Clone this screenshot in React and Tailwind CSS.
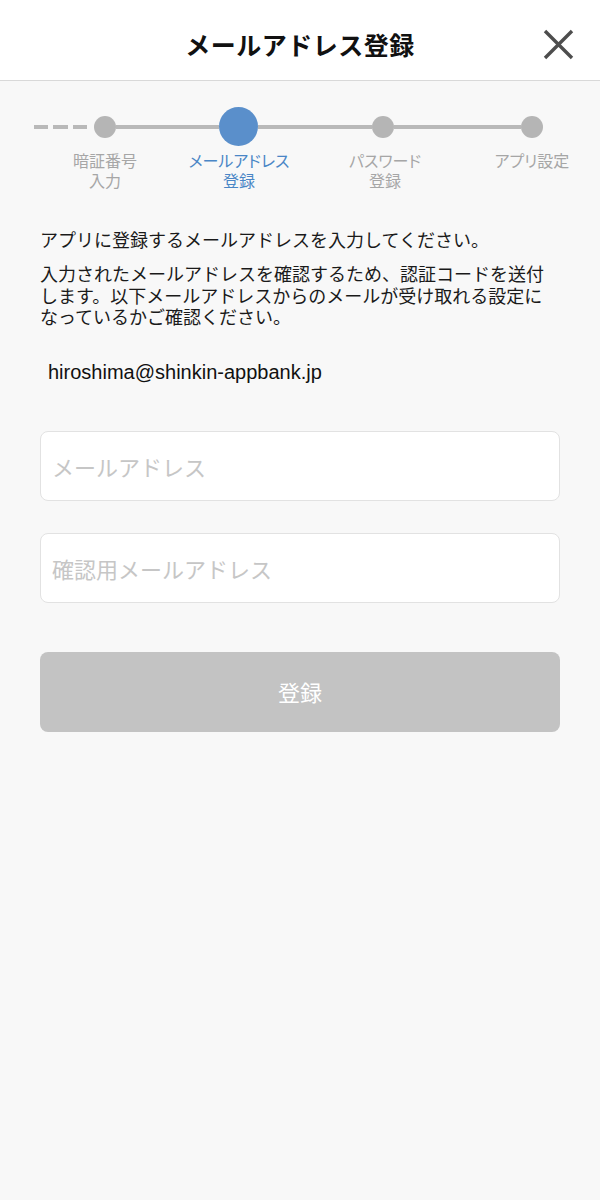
import { useState } from 'react';

const JP = "font-['Noto_Sans_CJK_JP',sans-serif]";

const steps = [
  { lines: ['暗証番号', '入力'], ml: 'ml-[45px]' },
  { lines: ['メールアドレス', '登録'], ml: 'ml-[14px]', active: true },
  { lines: ['パスワード', '登録'], ml: 'ml-[26px]' },
  { lines: ['アプリ設定'], ml: 'ml-[27px]' },
];

function Stepper() {
  return (
    <div className="pt-[26px]">
      <div className="flex items-center h-[39px] pl-[34px]">
        <div className="flex items-center gap-[5px]">
          <span className="w-[14px] h-[4px] bg-[#b9b9b9]" />
          <span className="w-[15px] h-[4px] bg-[#b9b9b9]" />
          <span className="w-[14px] h-[4px] bg-[#b9b9b9]" />
        </div>
        <span className="w-[7px]" />
        <span className="w-[22px] h-[22px] rounded-full bg-[#b5b5b5]" />
        <span className="w-[103px] h-[4px] bg-[#b9b9b9]" />
        <span className="w-[39px] h-[39px] rounded-full bg-[#5a8fcb]" />
        <span className="w-[114px] h-[4px] bg-[#b9b9b9]" />
        <span className="w-[22px] h-[22px] rounded-full bg-[#b5b5b5]" />
        <span className="w-[127px] h-[4px] bg-[#b9b9b9]" />
        <span className="w-[22px] h-[22px] rounded-full bg-[#b5b5b5]" />
      </div>
      <div className="flex pt-[4px]">
        {steps.map((s, i) => (
          <div
            key={i}
            className={`w-[120px] ${s.ml} shrink-0 whitespace-nowrap text-center text-[16px] leading-[20px] [font-feature-settings:'palt'] ${s.active ? 'text-[#4a86c6]' : 'text-[#a6a6a6]'}`}
          >
            {s.lines.map((l, j) => (
              <div key={j}>{l}</div>
            ))}
          </div>
        ))}
      </div>
    </div>
  );
}

export default function App() {
  const [email, setEmail] = useState('');
  const [confirm, setConfirm] = useState('');

  return (
    <div className={`min-h-[1200px] bg-[#f8f8f8] ${JP}`}>
      <header className="relative h-[81px] bg-white border-b border-[#d9d9d9] flex items-center justify-center">
        <h1 className="text-[25px] font-bold text-[#111] tracking-[0.5px] mt-[10px]">メールアドレス登録</h1>
        <button className="absolute right-[26px] top-[29px] w-[31px] h-[31px]">
          <svg viewBox="0 0 31 31" width="31" height="31">
            <path d="M2 2 L29 29 M29 2 L2 29" stroke="#4d4d4d" strokeWidth="3.4" strokeLinecap="butt" />
          </svg>
        </button>
      </header>

      <Stepper />

      <div className="px-[40px] pt-[38px]">
        <p className="text-[18px] leading-[22px] text-[#1a1a1a]">
          アプリに登録するメールアドレスを入力してください。
        </p>
        <p className="mt-[13px] text-[18px] leading-[21.5px] text-[#1a1a1a]">
          入力されたメールアドレスを確認するため、認証コードを送付
          <br />
          します。以下メールアドレスからのメールが受け取れる設定に
          <br />
          なっているかご確認ください。
        </p>
        <p className="mt-[32px] pl-[8px] text-[20px] leading-[24px] text-[#111] font-['Liberation_Sans',Arial,sans-serif]">
          hiroshima@shinkin-appbank.jp
        </p>

        <div className="mt-[47px] flex flex-col gap-[32px]">
          <input
            value={email}
            onChange={(e) => setEmail(e.target.value)}
            placeholder="メールアドレス"
            className="h-[70px] w-full rounded-[8px] border border-[#e2e2e2] bg-white px-[11px] text-[22px] text-[#222] placeholder:text-[#c6c6c6] outline-none"
          />
          <input
            value={confirm}
            onChange={(e) => setConfirm(e.target.value)}
            placeholder="確認用メールアドレス"
            className="h-[70px] w-full rounded-[8px] border border-[#e2e2e2] bg-white px-[11px] text-[22px] text-[#222] placeholder:text-[#c6c6c6] outline-none"
          />
        </div>

        <button
          disabled
          className="mt-[49px] h-[80px] w-full rounded-[8px] bg-[#c3c3c3] text-[22px] text-white"
        >
          登録
        </button>
      </div>
    </div>
  );
}
